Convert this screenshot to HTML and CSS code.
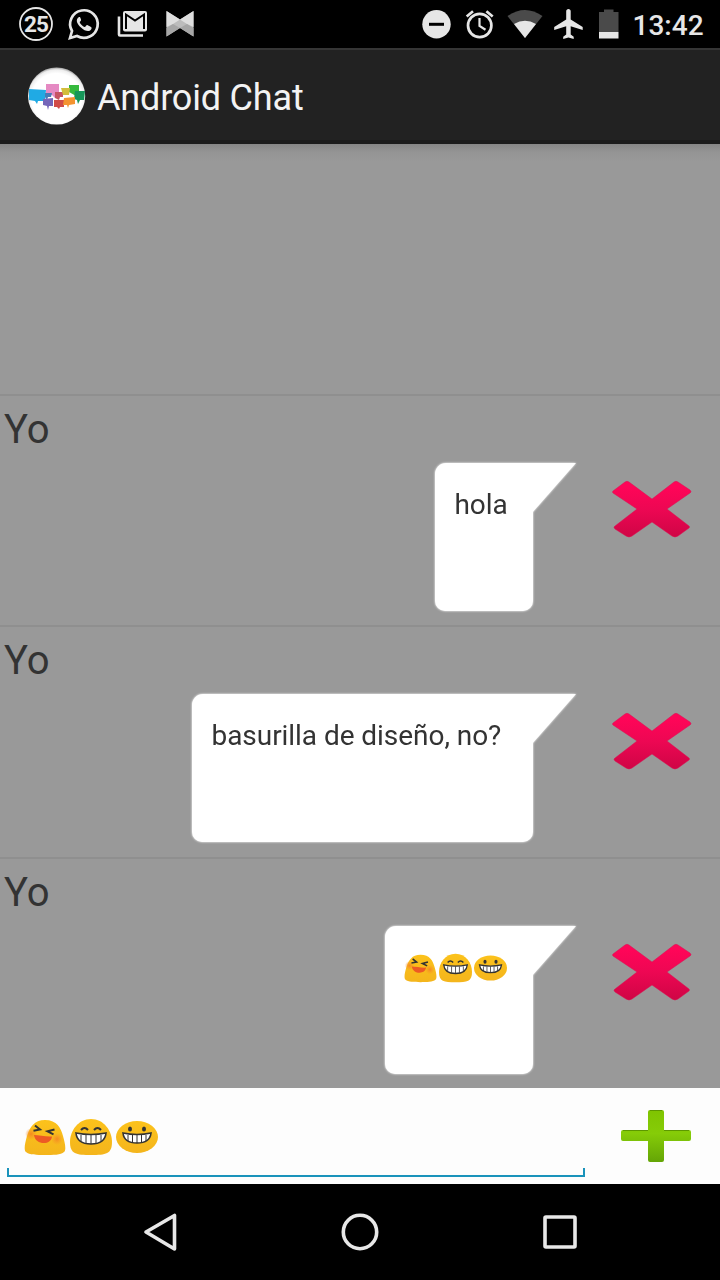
FILE: index.html
```html
<!DOCTYPE html>
<html lang="es">
<head>
<meta charset="utf-8">
<title>Android Chat</title>
<link rel="stylesheet" href="styles.css">
</head>
<body>
<svg class="defs" width="0" height="0" aria-hidden="true">
  <defs>
    <linearGradient id="red" x1="0" y1="0" x2="0" y2="1"><stop offset=".1" stop-color="#ff0558"/><stop offset=".5" stop-color="#ed0753"/><stop offset="1" stop-color="#cf0545"/></linearGradient>
    <linearGradient id="green" x1="0" y1="0" x2="0" y2="1"><stop offset="0" stop-color="#7fc400"/><stop offset=".45" stop-color="#86cc08"/><stop offset="1" stop-color="#64a506"/></linearGradient>
    <linearGradient id="gold" x1="0" y1="0" x2="0" y2="1"><stop offset="0" stop-color="#fcc21b"/><stop offset="1" stop-color="#f4b51c"/></linearGradient>
    <radialGradient id="blush"><stop offset="0" stop-color="#f58a20"/><stop offset="1" stop-color="#f79329" stop-opacity="0"/></radialGradient>
    <radialGradient id="disc" cy=".54" r=".53"><stop offset=".82" stop-color="#fff"/><stop offset=".94" stop-color="#eee"/><stop offset="1" stop-color="#b0b0b0"/></radialGradient>
    <symbol id="cross" viewBox="0 0 84 60">
      <path d="M15 3Q17 1.500 19 3L42 20 64 3Q66 1.500 68 3L80 11Q82 13 80 14L57 30 79 47Q80 48 79 49L68 57Q65 59 62 57L42 43 22 57Q19 59 16 57L5 50Q3 48 5 47L27 30 3 14Q2 13 3 12Z" fill="url(#red)" stroke="#dc0d50" stroke-opacity=".5"/>
    </symbol>
    <symbol id="laugh" viewBox="0 0 42 38">
      <path d="M21 2C33 2 37 10 39 18 41 25 42.500 32 40 34 37 37 29 37 21 37S5 37 2 34C-.5 32 1 25 3 18 6 9 10 2 21 2Z" fill="url(#gold)"/>
      <circle cx="7" cy="16" r="6" fill="url(#blush)"/><circle cx="33" cy="21" r="6" fill="url(#blush)"/>
      <path d="M11 7.500l5 4-6.500 1.200M30.500 11.500l-7 1.800 6 3" fill="none" stroke="#333" stroke-width="2"/>
      <path d="M10 17C15 17 22 19 28 18.500 27 28 11 27 10 17Z" fill="#ed5a24"/>
    </symbol>
    <symbol id="beam" viewBox="0 0 42 38">
      <path d="M21 1C34 1 42 13 42 24 42 36 36 37 21 37S0 36 0 24C0 13 8 1 21 1Z" fill="url(#gold)"/>
      <path d="M11 12q3.500-4 7 0M24 12q3.500-4 7 0" fill="none" stroke="#333" stroke-width="2"/>
      <path d="M6 15Q21 18 36 15 35 26 21 26T6 15Z" fill="#fff" stroke="#333" stroke-width="1.600"/>
      <path d="M11 17v6M16 17v8M21 17v9M26 17v8M31 17v6" stroke="#333"/>
    </symbol>
    <symbol id="grin" viewBox="0 0 42 38">
      <ellipse cx="21" cy="19" rx="21" ry="16" fill="url(#gold)"/>
      <ellipse cx="14" cy="11" rx="2" ry="2.500" fill="#333"/><ellipse cx="28" cy="11" rx="2" ry="2.500" fill="#333"/>
      <path d="M7 15Q21 18 35 15 34 25 21 25T7 15Z" fill="#fff" stroke="#333" stroke-width="1.600"/>
      <path d="M12 17v6M16.500 17v7M21 17v8M25.500 17v7M30 17v6" stroke="#333"/>
    </symbol>
  </defs>
</svg>
<div class="screen">
  <div class="status">
    <div class="notices">
      <svg viewBox="12 0 48 48"><circle cx="36" cy="24" r="16" fill="none" stroke="#e6e6e6" stroke-width="1.800"/><text x="36" y="32" class="count" text-anchor="middle">25</text></svg>
      <svg viewBox="60 0 48 48"><path d="M70 38L72 31A13.800 13.800 0 1 1 77 36Z" fill="none" stroke="#e6e6e6" stroke-width="2.700"/><path d="M79 17c-4 2.500-2 7 2 10.500 4 4 9 5 10.500 1.200.4-1.300-.1-1.800-4.200-3.700-1-.3-1.300 1.500-2.400 1.900-2 .2-5.300-3.600-5.200-4.800.5-1.200 1.700-1.400 1.300-2.700-.8-2-.7-2.500-2-2.400z" fill="#e6e6e6"/></svg>
      <svg viewBox="108 0 48 48"><path d="M119 16.500V34.500Q119 35.500 120 35.500H143" fill="none" stroke="#e6e6e6" stroke-width="2.600"/><rect x="123" y="11" width="24" height="20.500" rx="2" fill="#e6e6e6"/><path d="M126 29V14.500L135 20.500 144 14.500V29" fill="none" stroke="#000" stroke-width="2"/></svg>
      <svg viewBox="156 0 48 48"><path d="M166.500 11L180 19.500 193.500 11V36.500L180 28 166.500 36.500Z" fill="#bcbcbc"/><path d="M166.500 11L180 19.500 173 24 166.500 27ZM193.500 11L180 19.500 187 24 193.500 27Z" fill="#dedede"/><path d="M166.500 28L173 24 180 28 166.500 36.500ZM193.500 28L187 24 180 28 193.500 36.500Z" fill="#a6a6a6"/></svg>
    </div>
    <div class="system">
      <svg viewBox="415 0 44 48"><circle cx="436.500" cy="24.300" r="14.200" fill="#e6e6e6"/><path d="M429 24.300h15" stroke="#000" stroke-width="3"/></svg>
      <svg viewBox="459 0 44 48"><g fill="none" stroke="#e6e6e6" stroke-width="2.700"><circle cx="479.700" cy="25.500" r="11.700"/><path d="M466.700 16.500l6.300-5.200M492.700 16.500l-6.300-5.200"/><path d="M479.500 18v8l6 3.700" stroke-width="2.200"/></g></svg>
      <svg viewBox="503 0 44 48"><path d="M525 38L507.500 16Q525 4 542.500 16Z" fill="#4a4a4a"/><path d="M525 38L514 24Q525 17.500 536 24Z" fill="#e6e6e6"/></svg>
      <svg viewBox="547 0 44 48"><path transform="translate(551.200 6) scale(1.500)" d="M21 16v-2l-8-5V3.500c0-.83-.67-1.500-1.500-1.500S10 2.670 10 3.500V9l-8 5v2l8-2.500V19l-2 1.500V22l3.500-1 3.500 1v-1.500L13 19v-5.500l8 2.500z" fill="#e6e6e6"/></svg>
      <svg viewBox="591 0 44 48"><path d="M599 12h5v-2.500h9.500V12h5v20H599z" fill="#4a4a4a"/><path d="M599 32h19.500v6.500H599z" fill="#e6e6e6"/></svg>
      <span class="clock">13:42</span>
    </div>
  </div>

  <header class="bar">
    <svg class="logo" viewBox="28 66 58 60">
      <circle cx="56.600" cy="96" r="28.600" fill="url(#disc)"/>
      <path d="M29 89L46 90 45 101 38 101 37 104 35 101 29 100Z" fill="#20aae4"/>
      <path d="M69 85h10v11l-3 0-7-4z" fill="#35b93d"/>
      <path d="M75 91h10l-1 9-4 0-2 4-1-4-3-1z" fill="#17975a"/>
      <path d="M46 84h13v11l-3 0-1 3-3-3h-6z" fill="#e58ac3"/>
      <path d="M45 93h7l-1 4-3 0-1 3-2-3z" fill="#477bb7"/>
      <path d="M55 92h8v5l-3 0-1 3-4-2z" fill="#c65464"/>
      <path d="M61 88h9l-1 7-6 0z" fill="#d2bd3b"/>
      <path d="M43 99l10-1v8l-4 0-1 4-1-4-4-1z" fill="#7566b9"/>
      <path d="M54 100h10v7l-4 0-1 2-2-2h-3z" fill="#d14c48"/>
      <path d="M64 98l11-1v7l-6 1-1 3-1-3-4 0z" fill="#f49430"/>
    </svg>
    <h1 class="title">Android Chat</h1>
  </header>

  <main class="list">
    <section class="row">
      <div class="name">Yo</div>
      <div class="message">
        <div class="bubble"><div class="body short">hola</div><svg class="tail" viewBox="0 0 44 50"><path d="M0 0H44L0 50Z"/></svg></div>
        <svg class="delete"><use href="#cross"/></svg>
      </div>
    </section>
    <section class="row">
      <div class="name">Yo</div>
      <div class="message">
        <div class="bubble"><div class="body long">basurilla de diseño, no?</div><svg class="tail" viewBox="0 0 44 50"><path d="M0 0H44L0 50Z"/></svg></div>
        <svg class="delete"><use href="#cross"/></svg>
      </div>
    </section>
    <section class="row">
      <div class="name">Yo</div>
      <div class="message">
        <div class="bubble"><div class="body faces"><svg><use href="#laugh"/></svg><svg><use href="#beam"/></svg><svg><use href="#grin"/></svg></div><svg class="tail" viewBox="0 0 44 50"><path d="M0 0H44L0 50Z"/></svg></div>
        <svg class="delete"><use href="#cross"/></svg>
      </div>
    </section>
  </main>

  <div class="composer">
    <div class="field">
      <div class="draft"><svg><use href="#laugh"/></svg><svg><use href="#beam"/></svg><svg><use href="#grin"/></svg></div>
      <div class="underline"></div>
    </div>
    <svg class="add" viewBox="620 1108 72 56"><path d="M650 1110h12q2 0 2 2v18h25q2 0 2 2v7q0 2-2 2h-25v19q0 2-2 2h-12q-2 0-2-2v-19h-25q-2 0-2-2v-7q0-2 2-2h25v-18q0-2 2-2z" fill="url(#green)"/><path d="M650 1110.500h12M623 1130.500h25M664 1130.500h25" stroke="#5d9800"/></svg>
  </div>

  <nav class="nav">
    <svg viewBox="140 1212 40 40"><path d="M146 1232L174.500 1215.500V1249Z"/></svg>
    <svg viewBox="340 1212 40 40"><circle cx="360" cy="1232" r="16.700"/></svg>
    <svg viewBox="540 1212 40 40"><rect x="545" y="1217" width="30" height="30" rx="1"/></svg>
  </nav>
</div>
</body>
</html>
```
FILE: styles.css
```css
* { box-sizing: border-box; }
body { margin: 0; font-family: Roboto, sans-serif; background: #000; }
svg { display: block; flex: none; }
.defs { position: absolute; }
.screen { width: 720px; height: 1280px; display: flex; flex-direction: column; overflow: hidden; }

.status { height: 48px; display: flex; justify-content: space-between; background: #000; }
.notices { display: flex; padding-left: 12px; }
.notices svg { width: 48px; height: 48px; }
.count { font-size: 22.5px; font-weight: 700; fill: #e6e6e6; letter-spacing: -0.8px; }
.system { display: flex; width: 305.5px; }
.system svg { width: 44px; height: 48px; }
.clock { margin-left: -2px; color: #e6e6e6; font-size: 28px; font-weight: 500; line-height: 52px; white-space: nowrap; }

.bar { height: 96px; display: flex; align-items: center; padding-left: 28px; background: #222; border-top: 2px solid #353535; border-bottom: 4px solid #1b1b1b; }
.logo { width: 58px; height: 60px; margin-top: 2px; }
.title { margin: 6px 0 0 11px; font-size: 36px; font-weight: 400; line-height: 42px; letter-spacing: -0.18px; color: #f3f3f3; white-space: nowrap; }

.list { height: 944px; padding-top: 249.5px; background: linear-gradient(#858585, #949494 8px, #999 18px); }
.row { height: 231.5px; border-top: 2px solid #8f8f8f; padding-top: 10px; color: #333; }
.name { height: 57px; padding-left: 4px; font-size: 40px; line-height: 47px; }
.message { display: flex; justify-content: flex-end; padding-right: 26px; }
.bubble { display: flex; filter: drop-shadow(0 0 1px #fff); }
.body { height: 148px; padding: 26px 0 0 20px; border-radius: 11px 0 10px 10px; background: #fff; font-size: 28px; line-height: 32px; letter-spacing: -0.05px; white-space: nowrap; }
.short { width: 98px; }
.long { width: 341px; }
.faces { width: 148px; display: flex; gap: 2px; padding: 27px 0 0 19px; }
.faces svg { width: 33px; height: 30px; }
.tail { width: 44px; height: 50px; margin-left: -0.5px; fill: #fff; }
.delete { width: 84px; height: 60px; margin: 16.5px 0 0 34px; }

.composer { height: 96px; display: flex; background: #fdfdfd; }
.field { width: 578px; margin-left: 7px; display: flex; flex-direction: column; }
.draft { height: 80px; display: flex; gap: 4px; padding: 30px 0 0 16.5px; }
.draft svg { width: 42px; height: 38px; }
.underline { height: 9px; border: 2px solid #1a93bb; border-top: 0; }
.add { width: 72px; height: 56px; margin: 20px 0 0 35px; }

.nav { height: 96px; display: flex; align-items: center; justify-content: center; gap: 160px; background: #000; }
.nav svg { width: 40px; height: 40px; fill: none; stroke: #e8e8e8; stroke-width: 3.6; stroke-linejoin: round; }
```
